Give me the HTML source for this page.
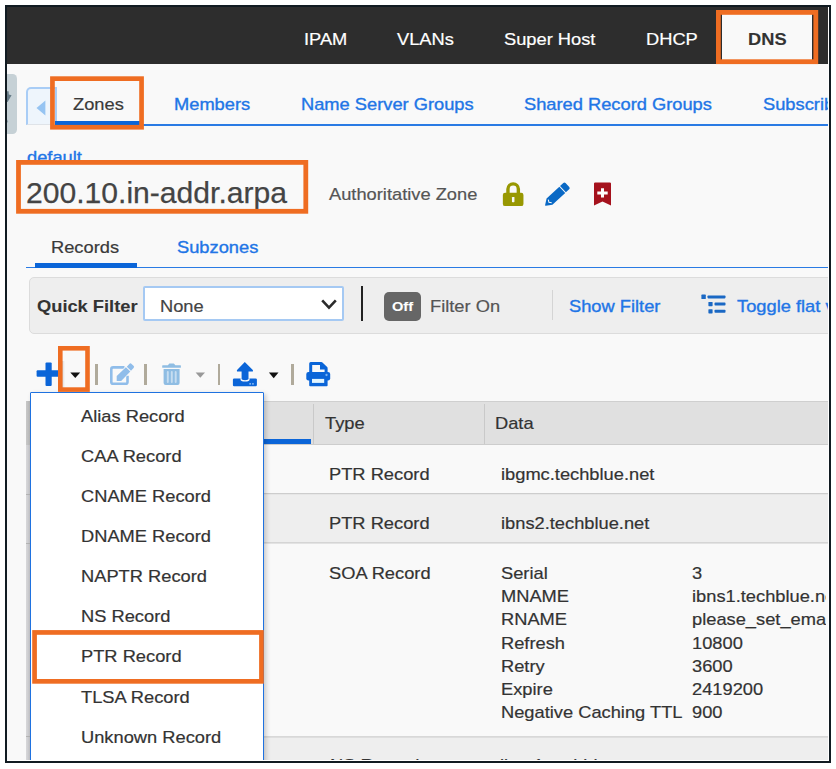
<!DOCTYPE html>
<html lang="en">
<head>
<meta charset="utf-8">
<title>DNS Zones - 200.10.in-addr.arpa</title>
<style>
*{box-sizing:border-box;margin:0;padding:0}
html,body{width:836px;height:769px;overflow:hidden;background:#fff}
body{font-family:"Liberation Sans",Arial,sans-serif;font-size:17px;color:#333;position:relative}
#frame{position:absolute;left:5px;top:5px;width:826px;height:758px;background:#111b22;}
#white{position:absolute;left:2px;top:2px;width:822px;height:754px;background:#fff;}
#app{position:absolute;left:7px;top:7px;width:821px;height:753px;background:#f9f9f9;overflow:hidden}
/* everything inside #app is positioned in page coordinates via this shim */
#pg{position:absolute;left:-7px;top:-7px;width:836px;height:769px}
.a{position:absolute}
.t{position:absolute;white-space:nowrap;line-height:22px;height:22px;transform:scaleX(1.075);transform-origin:0 50%;-webkit-text-stroke:0.2px currentColor}
.blue{color:#2175e6;-webkit-text-stroke:0.35px #2175e6}
.ob{position:absolute;border:5px solid #ef6f22}
#hdr{left:0;top:0;width:836px;height:64px;background:#2d2d2d}
#hdr .t{color:#fff}
.b{font-weight:bold;-webkit-text-stroke:0.1px currentColor}
.sep{width:2.4px;height:21px;top:363.8px;background:#b0aa9b}
.mi{left:81px;color:#333}
</style>
</head>
<body>
<div id="frame"><div id="white"></div></div>
<div id="app"><div id="pg">

<!-- top navigation -->
<div id="hdr" class="a">
  <span class="t" style="left:304px;top:28.6px">IPAM</span>
  <span class="t" style="left:397px;top:28.6px">VLANs</span>
  <span class="t" style="left:504px;top:28.6px">Super Host</span>
  <span class="t" style="left:646px;top:28.6px">DHCP</span>
</div>
<div class="a" style="left:722px;top:12px;width:90.4px;height:52px;background:#f9f9f9"></div>
<span class="t b" style="left:748px;top:28.6px;color:#333">DNS</span>

<!-- left collapse handle -->
<div class="a" style="left:7px;top:74px;width:9.6px;height:60px;background:#c6d1d6;border-radius:0 4.5px 4.5px 0"></div>
<svg class="a" style="left:7px;top:90px" width="6" height="34" viewBox="0 0 6 34"><path d="M0 1.2 L1.6 1.2 L1.8 4.6 L4.6 5.2 L0.6 12 L0 12 Z" fill="#667b87"/><path d="M0 29.5 L1.2 31.5 L0 33 Z" fill="#8a9da7"/></svg>

<!-- main tab strip -->
<div class="a" style="left:57px;top:124.3px;width:780px;height:1.4px;background:#2a7be4"></div>
<div class="a" style="left:26px;top:87.4px;width:31px;height:38px;border:2px solid #a9cdf6;border-bottom:1px solid #dfe3e8;border-radius:5px 0 0 0;background:#eef5fc"></div>
<svg class="a" style="left:36px;top:100px" width="10" height="16" viewBox="0 0 10 16"><path d="M9.4 0.6 L0.5 8 L9.4 15.4 Z" fill="#96c4f2"/></svg>
<div class="a" style="left:57px;top:80px;width:83px;height:45px;background:#f9f9f9"></div>
<div class="a" style="left:55px;top:121px;width:85px;height:4px;background:#0b65d8"></div>
<span class="t" style="left:72.6px;top:93.9px;color:#3a3a3a">Zones</span>
<span class="t blue" style="left:173.6px;top:93.9px">Members</span>
<span class="t blue" style="left:300.6px;top:93.9px">Name Server Groups</span>
<span class="t blue" style="left:523.6px;top:93.9px">Shared Record Groups</span>
<span class="t blue" style="left:762.6px;top:93.9px">Subscriber Services</span>

<!-- zone heading -->
<span class="t blue" style="left:26.7px;top:147.2px">default</span>
<div class="a" style="left:16px;top:160px;width:292px;height:54px;background:#f9f9f9"></div>
<span class="a" style="left:26px;top:173.3px;font-size:30.1px;line-height:40px;white-space:nowrap;color:#444;-webkit-text-stroke:0.25px #444">200.10.in-addr.arpa</span>
<span class="t" style="left:329px;top:183.5px;color:#555">Authoritative Zone</span>

<!-- lock -->
<svg class="a" style="left:502px;top:181px" width="23" height="26" viewBox="0 0 23 26">
  <g transform="translate(-.35,0)">
  <path d="M6.3 12.5 V8.1 a5.2 5.2 0 0 1 10.4 0 V12.5" fill="none" stroke="#989802" stroke-width="3.4"/>
  <rect x="1.2" y="11.7" width="20.6" height="13.4" rx="2.2" fill="#989802"/>
  <rect x="10.3" y="16" width="2.5" height="5.2" rx=".6" fill="#f9f9f9"/>
  </g>
</svg>
<!-- pencil -->
<svg class="a" style="left:544px;top:180px" width="28" height="28" viewBox="0 0 28 28">
  <g transform="translate(1.1,25.8) rotate(-43)" fill="#0a69c5">
    <path d="M0.5 -0.5 L6 -4.3 H23.5 V4.3 H6 L0.5 0.5 a.6 .6 0 0 1 0 -1 Z"/>
    <path d="M24.4 -4.3 H28.9 a1.6 1.6 0 0 1 1.6 1.6 V2.7 a1.6 1.6 0 0 1 -1.6 1.6 H24.4 Z"/>
    <path d="M6.5 -2.3 L5.2 0.1 L6.9 2.3" fill="none" stroke="#f9f9f9" stroke-width="1.1"/>
  </g>
</svg>
<!-- bookmark -->
<svg class="a" style="left:593px;top:182px" width="19" height="24" viewBox="0 0 19 24">
  <path d="M1 1.6 a1.2 1.2 0 0 1 1.2 -1.2 h14.6 a1.2 1.2 0 0 1 1.2 1.2 V23.6 L9.5 19.6 L1 23.6 Z" fill="#a5121d"/>
  <path d="M9.5 6.2 v9.4 M4.3 10.9 h10.4" stroke="#fdfdfd" stroke-width="3"/>
</svg>

<!-- sub tabs -->
<div class="a" style="left:26px;top:266.8px;width:810px;height:1.3px;background:#2a7be4"></div>
<div class="a" style="left:35px;top:263px;width:102px;height:5px;background:#0b65d8"></div>
<span class="t" style="left:51.2px;top:236.9px;color:#3a3a3a">Records</span>
<span class="t blue" style="left:177.2px;top:236.9px">Subzones</span>

<!-- quick filter bar -->
<div class="a" style="left:29px;top:277px;width:820px;height:57px;background:#eeeeee;border:1px solid #dcdcdc;border-radius:5px"></div>
<span class="t b" style="left:37.4px;top:295.5px;color:#333">Quick Filter</span>
<div class="a" style="left:143px;top:286px;width:201px;height:35px;background:#fff;border:2px solid #a5c9f3;border-radius:2px"></div>
<span class="t" style="left:160.4px;top:295.5px;color:#444">None</span>
<svg class="a" style="left:320px;top:298px" width="18" height="13" viewBox="0 0 18 13"><path d="M2.2 2.4 L9 9.6 L15.8 2.4" fill="none" stroke="#2b2b2b" stroke-width="2.6"/></svg>
<div class="a" style="left:360.8px;top:286px;width:2px;height:34.6px;background:#222"></div>
<div class="a" style="left:383.5px;top:291.5px;width:37.7px;height:29px;background:#666;border-radius:5px"></div>
<span class="t b" style="left:392.4px;top:295.5px;color:#fff;font-size:13.6px">Off</span>
<span class="t" style="left:430.4px;top:295.5px;color:#555">Filter On</span>
<div class="a" style="left:552px;top:290px;width:1px;height:30px;background:#d4d4d4"></div>
<span class="t blue" style="left:569.4px;top:295.5px">Show Filter</span>
<svg class="a" style="left:701px;top:294px" width="25" height="20" viewBox="0 0 25 20">
  <g fill="#1a68c4">
    <rect x="0.4" y="0.6" width="4.4" height="4.4" rx=".6"/><rect x="6.5" y="1.4" width="18" height="3" rx=".8"/>
    <rect x="7.4" y="8" width="4.2" height="4.2" rx=".6"/><rect x="13.5" y="8.6" width="11" height="3" rx=".8"/>
    <rect x="7.4" y="15.2" width="4.2" height="4.2" rx=".6"/><rect x="13.5" y="15.8" width="11" height="3" rx=".8"/>
  </g>
</svg>
<span class="t blue" style="left:737.4px;top:295.5px">Toggle flat view</span>

<!-- toolbar -->
<svg class="a" style="left:36px;top:362px" width="26" height="25" viewBox="0 0 26 25"><rect x="9.5" y=".6" width="6.2" height="23.5" rx="1" fill="#0b65d8"/><rect x=".6" y="8.3" width="25" height="6.5" rx="1" fill="#0b65d8"/></svg>
<div class="a" style="left:62px;top:350px;width:24px;height:38px;background:#f9f9f9"></div>
<div class="a" style="left:62.4px;top:360.5px;width:3px;height:27px;background:linear-gradient(90deg,#cfcfcf 0,#e6e6e6 45%,#f9f9f9 100%)"></div>
<svg class="a" style="left:70px;top:372px" width="12" height="8" viewBox="0 0 12 8"><g transform="translate(0,0.3)"><path d="M0.3 0.3 H10.2 L5.25 5.8 Z" fill="#111"/></g></svg>
<div class="a sep" style="left:95.2px"></div>
<!-- edit (disabled) -->
<svg class="a" style="left:109px;top:362px" width="27" height="25" viewBox="0 0 27 25"><g transform="translate(0.5,0.5)">
  <path d="M15 4.9 H3.6 a1.8 1.8 0 0 0 -1.8 1.8 V19.4 a1.8 1.8 0 0 0 1.8 1.8 H16.2 a1.8 1.8 0 0 0 1.8 -1.8 V13.3" fill="none" stroke="#90bdea" stroke-width="2.6"/>
  <path d="M7.2 13.4 L16.4 4.7 L20.8 9.1 L11.7 18.5 H7.2 Z" fill="#90bdea" stroke="#f9f9f9" stroke-width="1.2" paint-order="stroke"/>
  <path d="M17.3 4.2 L19.8 1.5 a1.6 1.6 0 0 1 2.3 -0.1 L24 3.2 a1.6 1.6 0 0 1 0.1 2.3 L21.5 8.2 Z" fill="#90bdea"/>
</g></svg>
<div class="a sep" style="left:144.4px"></div>
<!-- trash (disabled) -->
<svg class="a" style="left:162px;top:363px" width="19" height="23" viewBox="0 0 19 23">
  <path d="M5.9 2.2 L6.9 0.9 a.7 .7 0 0 1 .6 -.3 h4.2 a.7 .7 0 0 1 .6 .3 L13.3 2.2 H18.3 a.6 .6 0 0 1 .6 .6 V4.2 a.6 .6 0 0 1 -.6 .6 H0.8 a.6 .6 0 0 1 -.6 -.6 V2.8 a.6 .6 0 0 1 .6 -.6 Z" fill="#8fbde3"/>
  <path d="M1.6 6.1 H17.6 V20 a2 2 0 0 1 -2 2 H3.6 a2 2 0 0 1 -2 -2 Z" fill="#8fbde3"/>
  <path d="M5.8 9 V19 M9.8 9 V19 M13.7 9 V19" stroke="#c6ddf1" stroke-width="1.9" stroke-linecap="round"/>
</svg>
<svg class="a" style="left:195px;top:372px" width="11" height="7" viewBox="0 0 11 7"><g transform="translate(0.4,0.2)"><path d="M0.2 0.2 H9.6 L4.9 5.6 Z" fill="#999"/></g></svg>
<div class="a sep" style="left:218px"></div>
<!-- upload -->
<svg class="a" style="left:232px;top:361px" width="26" height="26" viewBox="0 0 26 26"><g transform="translate(0.5,0.5)">
  <rect x=".4" y="17" width="24" height="7.7" rx="1.2" fill="#0b65d8"/>
  <path d="M7.9 16.8 H17.2 V17.4 a4.65 2.7 0 0 1 -9.3 0 Z" fill="#f9f9f9"/>
  <path d="M9.1 9.5 H16 V17.1 a3.45 1.7 0 0 1 -6.9 0 Z" fill="#0b65d8"/>
  <path d="M12.3 0.5 L20.3 8.5 a.5 .5 0 0 1 .15 .4 V9.6 a.5 .5 0 0 1 -.5 .5 H4.9 a.5 .5 0 0 1 -.5 -.5 V8.9 a.5 .5 0 0 1 .15 -.4 Z" fill="#0b65d8"/>
  <rect x="16.8" y="21.6" width="1.7" height="1.5" fill="#8dbcf2"/><rect x="19.6" y="21.6" width="1.7" height="1.5" fill="#8dbcf2"/>
</g></svg>
<svg class="a" style="left:268px;top:372px" width="11" height="8" viewBox="0 0 11 8"><g transform="translate(0.7,0.3)"><path d="M0.2 0.2 H9.8 L5 6 Z" fill="#111"/></g></svg>
<div class="a sep" style="left:291.3px"></div>
<!-- print -->
<svg class="a" style="left:306px;top:361px" width="26" height="26" viewBox="0 0 26 26"><g transform="translate(0,0.5)">
  <path d="M4.7 11.5 V1.95 H15.4 L20.1 6.6 V11.5" fill="none" stroke="#0b65d8" stroke-width="3" stroke-linejoin="round"/>
  <path d="M14.6 2 V7.4 H20 Z" fill="#0b65d8" stroke="#0b65d8" stroke-width="1.2"/>
  <rect x=".3" y="10.4" width="23.9" height="8.5" rx="2.2" fill="#0b65d8"/>
  <rect x="3.2" y="16" width="18.4" height="8.7" rx=".9" fill="#0b65d8"/>
  <rect x="6" y="17.4" width="12.2" height="4" fill="#e2f5ff"/>
  <circle cx="20.5" cy="13.5" r="1.15" fill="#79b0f0"/>
</g></svg>

<!-- records grid -->
<div class="a" style="left:26px;top:401px;width:810px;height:44px;background:#e0e0e0;border-top:1px solid #cfcfcf;border-bottom:1px solid #cdcdcd"></div>
<div class="a" style="left:26px;top:439.4px;width:285px;height:4.3px;background:#0b65d8"></div>
<div class="a" style="left:313px;top:404px;width:1px;height:40px;background:#c9c9c9"></div>
<div class="a" style="left:484px;top:404px;width:1px;height:40px;background:#c9c9c9"></div>
<span class="t" style="left:324.5px;top:413.3px;color:#333">Type</span>
<span class="t" style="left:494.5px;top:413.3px;color:#333">Data</span>

<div class="a" style="left:26px;top:445px;width:810px;height:49px;background:#f9f9f9"></div>
<div class="a" style="left:26px;top:494px;width:810px;height:49px;background:#eeeeee"></div>
<div class="a" style="left:26px;top:543px;width:810px;height:194px;background:#f9f9f9"></div>
<div class="a" style="left:26px;top:737px;width:810px;height:40px;background:#eeeeee"></div>
<svg class="a" style="left:0;top:0" width="836" height="769" viewBox="0 0 836 769"><g stroke="#cdcdcd" stroke-width="1.2"><path d="M26 493.6 H836 M26 542.9 H836 M26 736.9 H836"/></g></svg>

<span class="t" style="left:329px;top:464.3px">PTR Record</span>
<span class="t" style="left:500.5px;top:464.3px">ibgmc.techblue.net</span>
<span class="t" style="left:329px;top:513.3px">PTR Record</span>
<span class="t" style="left:500.5px;top:513.3px">ibns2.techblue.net</span>
<span class="t" style="left:329.4px;top:562.6px">SOA Record</span>

<span class="t" style="left:500.7px;top:562.6px">Serial</span><span class="t" style="left:692.4px;top:562.6px">3</span>
<span class="t" style="left:500.7px;top:585.9px">MNAME</span><span class="t" style="left:692.4px;top:585.9px">ibns1.techblue.net</span>
<span class="t" style="left:500.7px;top:609.2px">RNAME</span><span class="t" style="left:692.4px;top:609.2px">please_set_email@absolutely.nowhere</span>
<span class="t" style="left:500.7px;top:632.5px">Refresh</span><span class="t" style="left:692.4px;top:632.5px">10800</span>
<span class="t" style="left:500.7px;top:655.8px">Retry</span><span class="t" style="left:692.4px;top:655.8px">3600</span>
<span class="t" style="left:500.7px;top:679.1px">Expire</span><span class="t" style="left:692.4px;top:679.1px">2419200</span>
<span class="t" style="left:500.7px;top:702.4px">Negative Caching TTL</span><span class="t" style="left:692.4px;top:702.4px">900</span>

<span class="t" style="left:330px;top:755px">NS Record</span>
<span class="t" style="left:500px;top:755px">ibns1.techblue.net</span>

<div class="a" style="left:826.3px;top:546px;width:3px;height:188px;background:#f9f9f9"></div>
<!-- grid left edge -->
<div class="a" style="left:26px;top:401px;width:5px;height:44px;background:linear-gradient(90deg,#c8c8c8,#b6b6b6)"></div>
<div class="a" style="left:26px;top:445px;width:5px;height:320px;background:linear-gradient(90deg,#d8d8da,#c2c2c6)"></div>
<div class="a" style="left:26px;top:494px;width:5px;height:1px;background:#b4b4b4"></div><div class="a" style="left:26px;top:543px;width:5px;height:1px;background:#b4b4b4"></div><div class="a" style="left:26px;top:736px;width:5px;height:1px;background:#b4b4b4"></div>

<!-- add-record dropdown -->
<div class="a" style="left:30px;top:391.6px;width:233.7px;height:380px;background:#fff;border:1.8px solid #1f72e0;border-radius:1px;box-shadow:2px 2px 5px rgba(0,0,0,.2)"></div>
<span class="t mi" style="top:405.8px">Alias Record</span>
<span class="t mi" style="top:445.9px">CAA Record</span>
<span class="t mi" style="top:486px">CNAME Record</span>
<span class="t mi" style="top:526.1px">DNAME Record</span>
<span class="t mi" style="top:566.2px">NAPTR Record</span>
<span class="t mi" style="top:606.3px">NS Record</span>
<span class="t mi" style="top:646.4px">PTR Record</span>
<span class="t mi" style="top:686.5px">TLSA Record</span>
<span class="t mi" style="top:726.6px">Unknown Record</span>

<!-- callout highlight boxes -->
<svg class="a" style="left:0;top:0;pointer-events:none" width="836" height="769" viewBox="0 0 836 769"><g fill="none" stroke="#ef6d22"><rect x="718.4" y="12.4" width="97.4" height="49.3" stroke-width="4.8"/><rect x="52.45" y="78.65" width="89.1" height="48.6" stroke-width="4.7"/><rect x="18.5" y="162.4" width="287.3" height="48.9" stroke-width="4.8"/><rect x="60.3" y="348.3" width="27.2" height="41.3" stroke-width="4.6"/><rect x="34.55" y="632.45" width="226.9" height="48.9" stroke-width="4.7"/></g></svg>

</div></div>
</body>
</html>
